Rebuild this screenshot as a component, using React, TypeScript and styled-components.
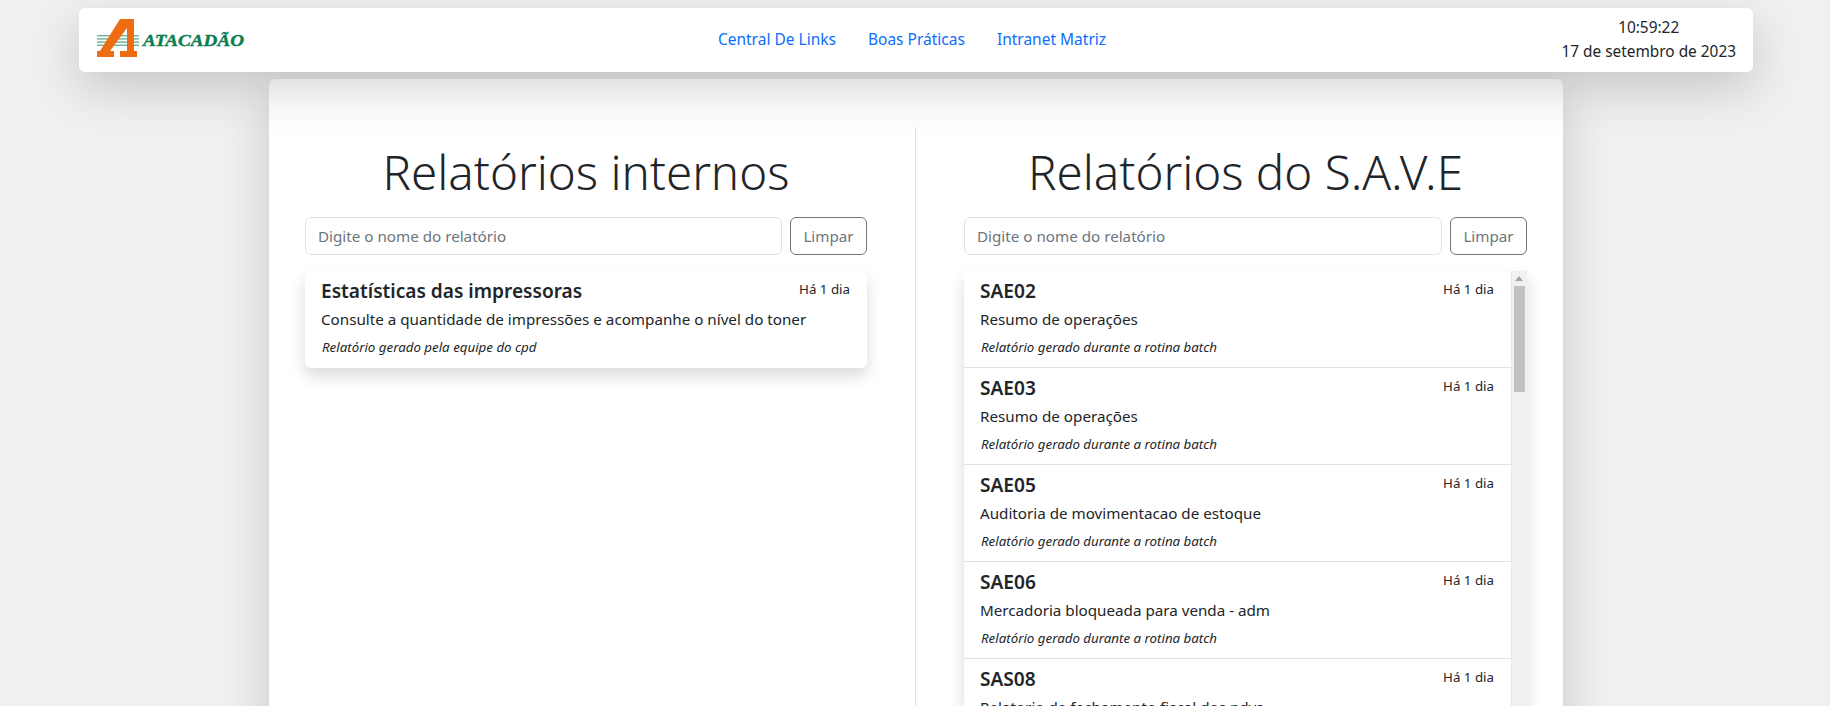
import styled, { createGlobalStyle } from "styled-components";

const GlobalStyle = createGlobalStyle`
  * { box-sizing: border-box; }
  html, body {
    margin: 0;
    height: 706px;
    overflow: hidden;
    background: #f0f0f0;
    color: #212529;
    font-family: "Noto Sans", "Open Sans", sans-serif;
    font-size: 16px;
    line-height: 1.5;
  }
`;

const Page = styled.div`
  height: 706px;
  overflow: hidden;
  padding-top: 8px;
`;

const Nav = styled.nav`
  position: relative;
  z-index: 2;
  height: 64px;
  margin: 0 77px 0 79px;
  padding: 0 17px 0 18px;
  display: grid;
  grid-template-columns: 1fr auto 1fr;
  align-items: center;
  background: #fff;
  border-radius: 6px;
  box-shadow: 0 16px 48px rgba(0, 0, 0, 0.175);
`;

const Links = styled.div`
  display: flex;
  gap: 32px;
  margin: -1px 9px 0 0;
`;

const NavLink = styled.a`
  color: #0d6efd;
  text-decoration: none;
  font-size: 15.5px;
`;

const Clock = styled.div`
  justify-self: end;
  margin-top: -1px;
  text-align: center;
  font-size: 15.4px;
  line-height: 24px;
`;

const Main = styled.main`
  margin: 7px 267px 0 269px;
  height: 700px;
  padding: 48px 36px 0;
  display: grid;
  grid-template-columns: 610px 1fr;
  background: #fff;
  border-radius: 6px;
  box-shadow: 0 16px 48px rgba(0, 0, 0, 0.175);
`;

const Column = styled.section<{ $right?: boolean }>`
  min-width: 0;
  ${(p) =>
    p.$right
      ? "padding-left: 48px; border-left: 1px solid #dee2e6;"
      : "padding-right: 48px;"}
`;

const Heading = styled.h1`
  margin: 0;
  height: 90px;
  font-size: 47.5px;
  font-weight: 300;
  line-height: 90px;
  text-align: center;
`;

const SearchRow = styled.div`
  display: flex;
  gap: 8px;
  margin-bottom: 16px;
`;

const SearchInput = styled.input`
  flex: 1;
  min-width: 0;
  height: 38px;
  padding: 6px 12px;
  border: 1px solid #dee2e6;
  border-radius: 6px;
  background: #fff;
  font: inherit;
  font-size: 15.2px;
  &::placeholder {
    color: #6c757d;
    opacity: 1;
  }
`;

const ClearButton = styled.button`
  height: 38px;
  width: 77px;
  padding: 0;
  border: 1px solid #6c757d;
  border-radius: 6px;
  background: transparent;
  color: #6c757d;
  font: inherit;
  font-size: 15.2px;
`;

const List = styled.div`
  border-radius: 6px;
  background: #fff;
  box-shadow: 0 8px 16px rgba(0, 0, 0, 0.15);
`;

const ScrollList = styled(List)`
  height: 440px;
  display: flex;
  overflow: hidden;
  border-radius: 6px 0 0 6px;
`;

const Rows = styled.div`
  flex: 1;
  min-width: 0;
`;

const ScrollRail = styled.div`
  flex: none;
  width: 16px;
  background: #f1f1f1;
  border-left: 1px solid #e9e9e9;
`;

const ScrollArrow = styled.div`
  width: 8px;
  height: 5px;
  margin: 5px 0 5px 3px;
  background: #a3a3a3;
  clip-path: polygon(50% 0, 100% 100%, 0 100%);
`;

const ScrollThumb = styled.div`
  width: 11px;
  height: 106px;
  margin-left: 2px;
  background: #c1c1c1;
`;

const Item = styled.div`
  height: 97px;
  padding: 8px 16px;
  border-bottom: 1px solid #dee2e6;
  &:last-child {
    border-bottom: 0;
  }
`;

const ItemTop = styled.div`
  display: flex;
  justify-content: space-between;
  margin-bottom: 4px;
`;

const ItemTitle = styled.h5`
  margin: 0;
  font-size: 19.1px;
  font-weight: 600;
  line-height: 24px;
`;

const Age = styled.small`
  margin-right: 1px;
  font-size: 13.3px;
  line-height: 20px;
`;

const Description = styled.p`
  margin: 0 0 4px;
  font-size: 15.2px;
  line-height: 24px;
`;

const Note = styled.small`
  display: block;
  margin-left: 1px;
  font-size: 13.3px;
  font-style: italic;
  line-height: 24px;
`;

const Logo = () => (
  <svg width="150" height="42" viewBox="0 0 150 42" aria-label="Atacadão">
    <g fill="#6cb592">
      <rect x="0" y="16" width="42" height="1.4" />
      <rect x="0" y="19.2" width="42" height="1.4" />
      <rect x="0" y="22.4" width="42" height="1.4" />
      <rect x="0" y="25.6" width="42" height="1.4" />
    </g>
    <path
      d="M23 0H37V32H40V38H23V32H30V9L13 32H17V38H0V32H3Z"
      fill="#ef6c13"
    />
    <text
      x="46"
      y="26.5"
      textLength="101"
      lengthAdjust="spacingAndGlyphs"
      fontFamily="'Liberation Serif', serif"
      fontWeight="700"
      fontStyle="italic"
      fontSize="17"
      fill="#0c7d50"
      stroke="#0c7d50"
      strokeWidth="0.4"
    >
      ATACADÃO
    </text>
  </svg>
);

const saveReports = [
  ["SAE02", "Resumo de operações"],
  ["SAE03", "Resumo de operações"],
  ["SAE05", "Auditoria de movimentacao de estoque"],
  ["SAE06", "Mercadoria bloqueada para venda - adm"],
  ["SAS08", "Relatorio de fechamento fiscal dos pdvs"],
];

const Report = ({ title, text, note }: { title: string; text: string; note: string }) => (
  <Item>
    <ItemTop>
      <ItemTitle>{title}</ItemTitle>
      <Age>Há 1 dia</Age>
    </ItemTop>
    <Description>{text}</Description>
    <Note>{note}</Note>
  </Item>
);

export default function App() {
  return (
    <Page>
      <GlobalStyle />
      <Nav>
        <Logo />
        <Links>
          <NavLink href="#">Central De Links</NavLink>
          <NavLink href="#">Boas Práticas</NavLink>
          <NavLink href="#">Intranet Matriz</NavLink>
        </Links>
        <Clock>
          10:59:22
          <br />
          17 de setembro de 2023
        </Clock>
      </Nav>
      <Main>
        <Column>
          <Heading>Relatórios internos</Heading>
          <SearchRow>
            <SearchInput placeholder="Digite o nome do relatório" />
            <ClearButton>Limpar</ClearButton>
          </SearchRow>
          <List>
            <Report
              title="Estatísticas das impressoras"
              text="Consulte a quantidade de impressões e acompanhe o nível do toner"
              note="Relatório gerado pela equipe do cpd"
            />
          </List>
        </Column>
        <Column $right>
          <Heading>Relatórios do S.A.V.E</Heading>
          <SearchRow>
            <SearchInput placeholder="Digite o nome do relatório" />
            <ClearButton>Limpar</ClearButton>
          </SearchRow>
          <ScrollList>
            <Rows>
              {saveReports.map(([title, text]) => (
                <Report
                  key={title}
                  title={title}
                  text={text}
                  note="Relatório gerado durante a rotina batch"
                />
              ))}
            </Rows>
            <ScrollRail>
              <ScrollArrow />
              <ScrollThumb />
            </ScrollRail>
          </ScrollList>
        </Column>
      </Main>
    </Page>
  );
}
